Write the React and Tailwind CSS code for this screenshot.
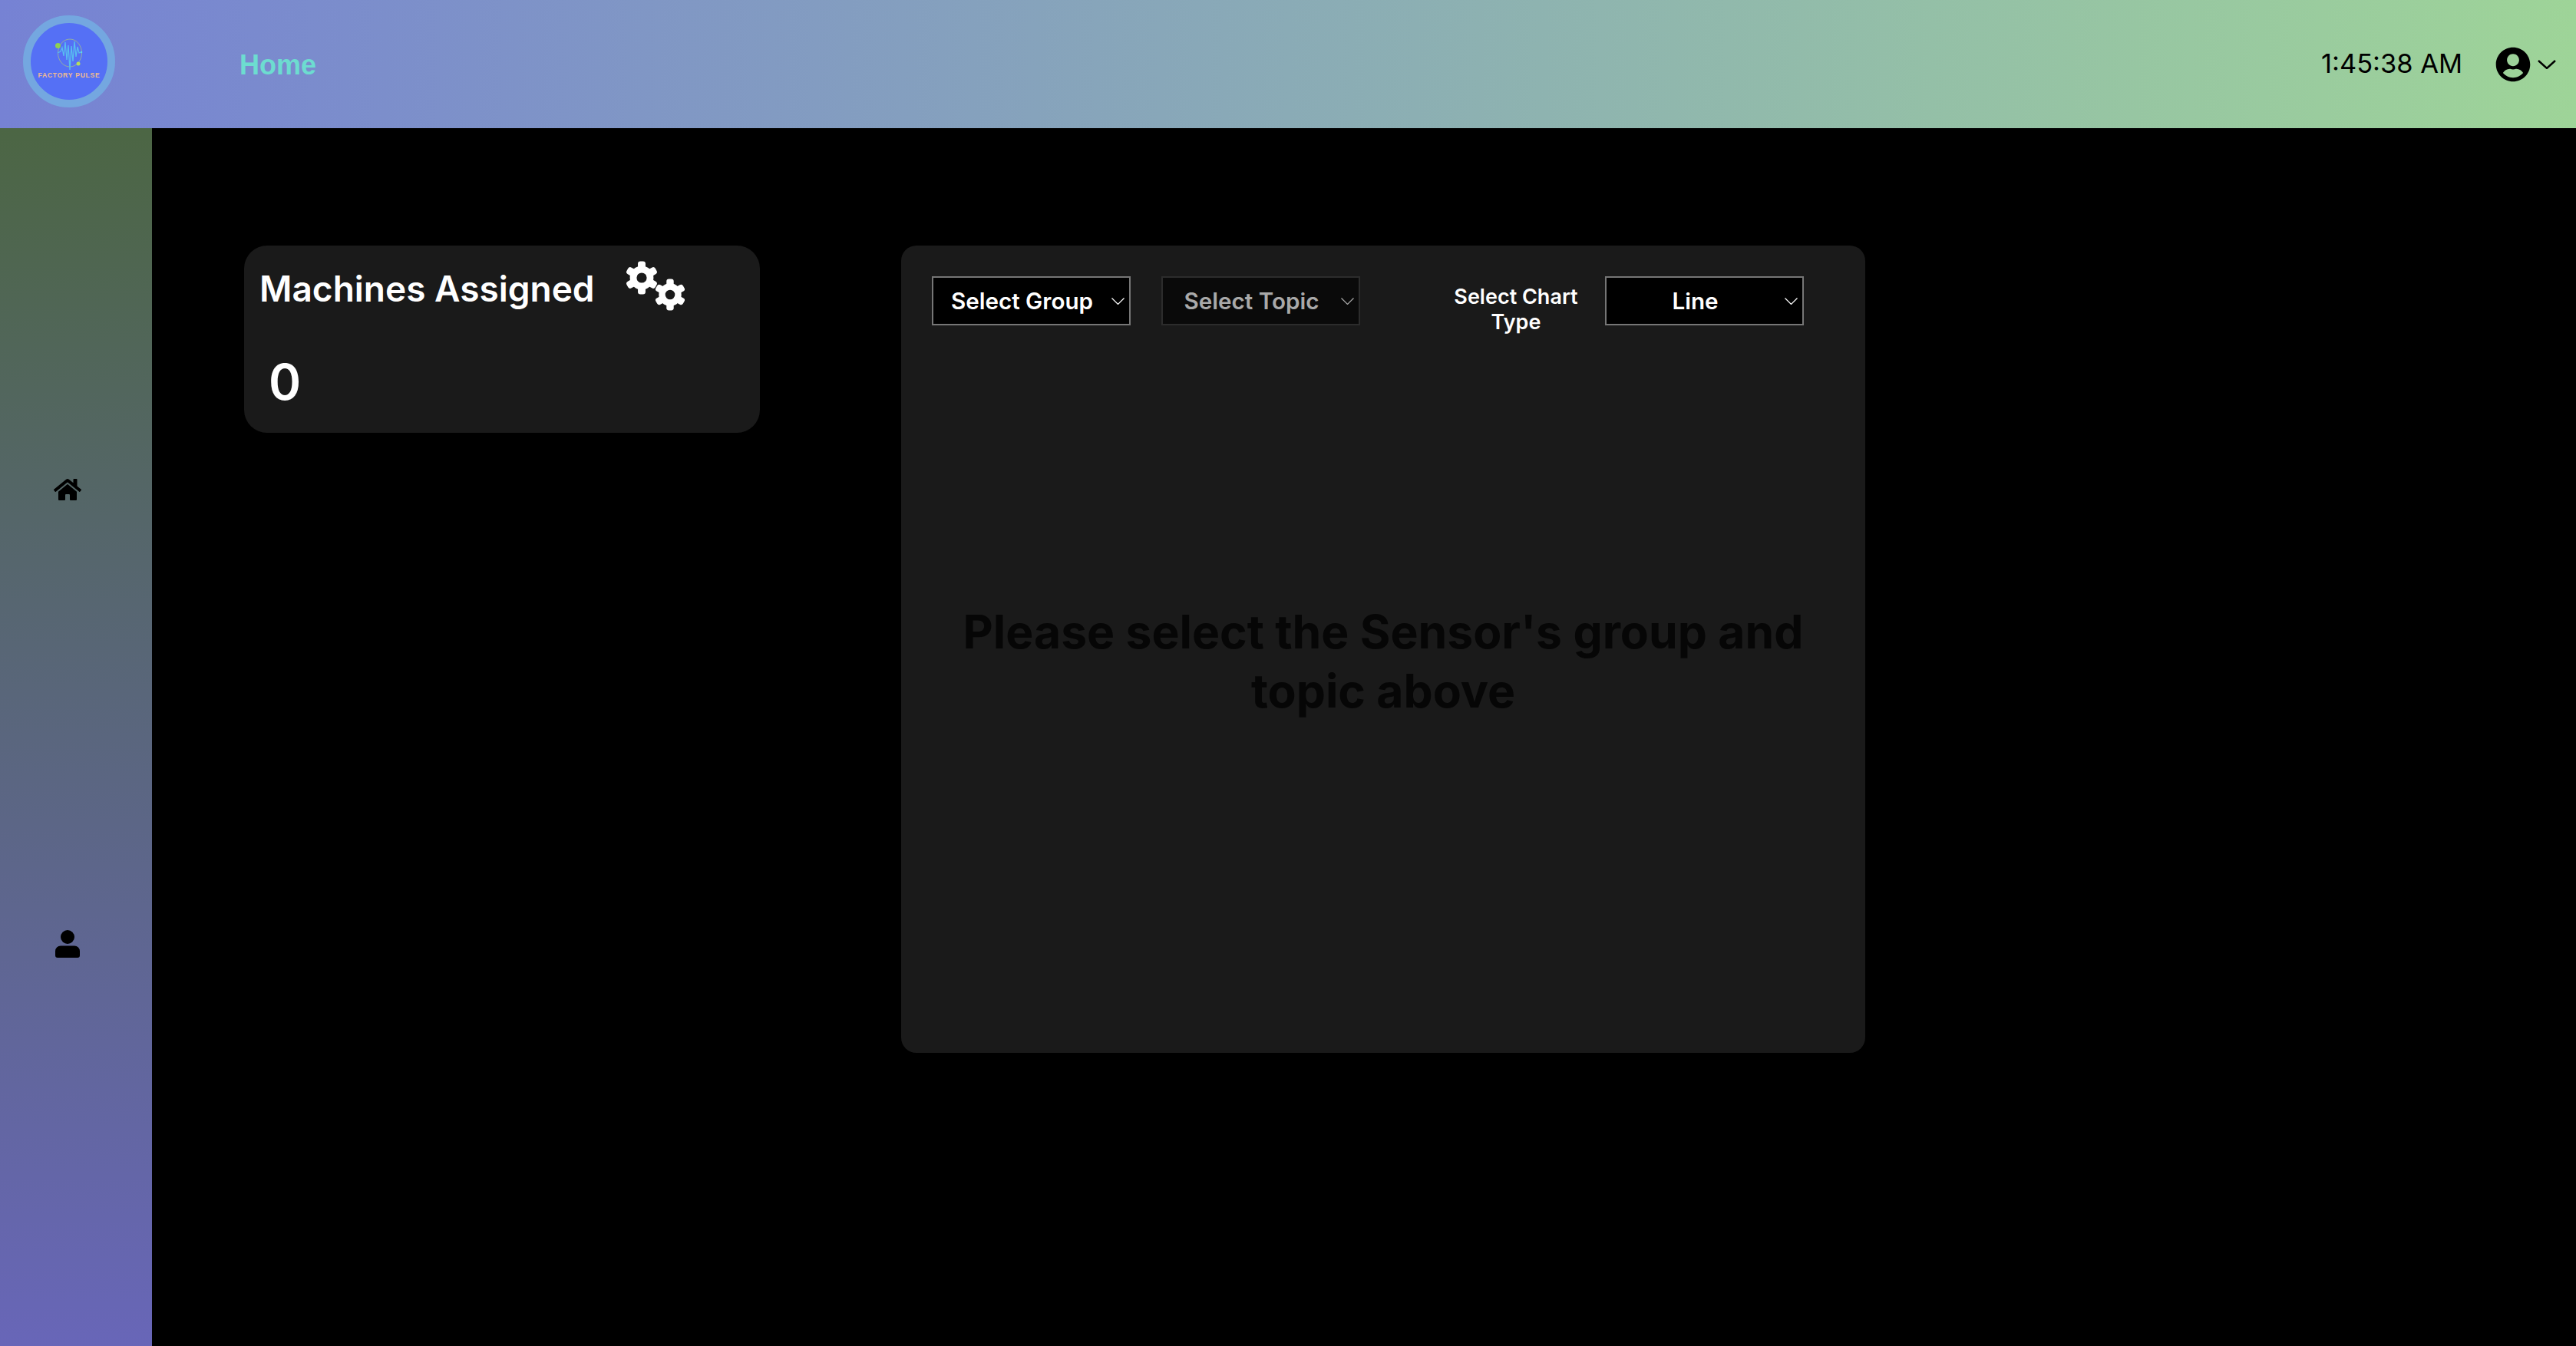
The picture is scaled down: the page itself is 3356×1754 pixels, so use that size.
import React from "react";
import { FaHome, FaUserCircle } from "react-icons/fa";

const Gear = ({ className }) => (
  <svg viewBox="0 0 40 40" className={className}>
    <circle cx="20" cy="20" r="10" fill="none" stroke="#fff" strokeWidth="8" />
    {[0, 60, 120, 180, 240, 300].map((a) => (
      <rect key={a} x="15.5" y="0.5" width="9" height="10" rx="3" fill="#fff" transform={`rotate(${a} 20 20)`} />
    ))}
  </svg>
);

const Chevron = () => (
  <svg viewBox="0 0 17 9" className="absolute right-[8px] top-[28px] w-[17px] h-[9px] pointer-events-none" fill="none" stroke="currentColor" strokeWidth="1.2">
    <polyline points="0.5,0.5 8.5,8.5 16.5,0.5" />
  </svg>
);

const Select = ({ value, disabled }) => (
  <div className={disabled ? "relative text-[#a9a9a9]" : "relative text-white"}>
    <select
      disabled={disabled}
      defaultValue={value}
      className={
        disabled
          ? "block appearance-none w-[259px] h-[64px] border-2 border-[#2c2c2c] bg-[#0a0a0a] text-center pr-[24px] text-[29.6px] font-semibold text-[#a9a9a9] font-['Inter',sans-serif] rounded-none"
          : "block appearance-none w-[259px] h-[64px] border-2 border-[#767676] bg-black text-center pr-[24px] text-[29.6px] font-semibold text-white font-['Inter',sans-serif] rounded-none"
      }
    >
      <option>{value}</option>
    </select>
    <Chevron />
  </div>
);

const Logo = () => (
  <div className="w-[120px] h-[120px] mb-[7px] rounded-full border-[10px] border-[#74a7e0] bg-[#5570f5] flex flex-col items-center pt-[20px] shrink-0">
    <svg viewBox="0 0 36 42" className="w-[36px] h-[42px]" fill="none">
      <ellipse cx="19" cy="19" rx="15.5" ry="18" stroke="#b9d66a" strokeWidth="0.6" />
      <circle cx="3.5" cy="9.5" r="3.5" fill="#8fd14f" />
      <circle cx="30" cy="33" r="2.5" fill="#b5dd5a" />
      <circle cx="34" cy="18" r="1.3" fill="#5fd8e8" />
      <polyline
        points="3,19 7,17 9,12 11,23 13,5 15,28 17,9 19,41 21,10 23,30 25,4 27,24 29,11 31,19 34,18"
        stroke="#58bdf0"
        strokeWidth="1.3"
      />
    </svg>
    <div className="mt-[1px] text-[8.5px] leading-[10px] font-bold tracking-[0.8px] text-[#f2bd8e] whitespace-nowrap font-['Liberation_Sans',sans-serif]">
      FACTORY PULSE
    </div>
  </div>
);

export default function App() {
  return (
    <div className="min-h-[1754px] w-full bg-black flex flex-col font-['Inter',sans-serif]">
      <header className="h-[167px] flex items-center pl-[30px] pr-[26px] bg-[linear-gradient(90deg,#7682d4,#9ed498)] shrink-0">
        <Logo />
        <a className="ml-[162px] mt-[2px] text-[36px] font-bold leading-none text-[#6ddcd0] font-['Liberation_Sans',sans-serif]">Home</a>
        <div className="ml-auto flex items-center text-black">
          <span className="text-[34.4px] leading-none">1:45:38 AM</span>
          <FaUserCircle className="ml-[43px] w-[46px] h-[46px]" />
          <svg viewBox="0 0 24 12" className="ml-[9px] w-[24px] h-[12px]" fill="none" stroke="#000" strokeWidth="2.4">
            <polyline points="1,1 12,11 23,1" />
          </svg>
        </div>
      </header>
      <div className="flex flex-1">
        <aside className="w-[198px] shrink-0 flex flex-col pl-[70px] pt-[455px] bg-[linear-gradient(180deg,#4c6644,#6866b8)]">
          <FaHome className="w-[36px] h-[32px] text-black" />
          <svg viewBox="0 0 32 36" className="mt-[558px] ml-[2px] w-[32px] h-[36px]" fill="#000">
            <circle cx="16" cy="9" r="9" />
            <path d="M7 20.5h18a7 7 0 0 1 7 7V33a3 3 0 0 1-3 3H3a3 3 0 0 1-3-3v-5.5a7 7 0 0 1 7-7z" />
          </svg>
        </aside>
        <main className="flex items-start pl-[120px] pt-[153px] gap-[184px]">
          <section className="w-[672px] h-[244px] rounded-[30px] bg-[#1a1a1a] text-white pl-[20px] relative">
            <div className="flex items-start">
              <h2 className="mt-[27px] text-[46px] leading-[58px] font-semibold whitespace-nowrap">Machines Assigned</h2>
              <div className="ml-[39px] mt-[20px] w-[84px] h-[66px] flex items-start">
                <Gear className="w-[44px] h-[44px] shrink-0" />
                <Gear className="-ml-[6px] mt-[23px] w-[42px] h-[42px] shrink-0" />
              </div>
            </div>
            <div className="mt-[53px] ml-[12px] text-[64px] leading-[78px] font-semibold">0</div>
          </section>
          <section className="w-[1256px] h-[1052px] rounded-[20px] bg-[#1a1a1a] p-[40px]">
            <div className="flex items-start">
              <Select value="Select Group" />
              <div className="ml-[40px]">
                <Select value="Select Topic" disabled />
              </div>
              <label className="ml-[103px] mt-[10px] w-[200px] text-center text-[27px] leading-[33px] font-semibold text-white">
                Select Chart Type
              </label>
              <div className="ml-[16px]">
                <Select value="Line" />
              </div>
            </div>
            <p className="mt-[349px] text-center text-[60.6px] leading-[77px] font-bold text-[#060606]">
              Please select the Sensor's group and topic above
            </p>
          </section>
        </main>
      </div>
    </div>
  );
}
